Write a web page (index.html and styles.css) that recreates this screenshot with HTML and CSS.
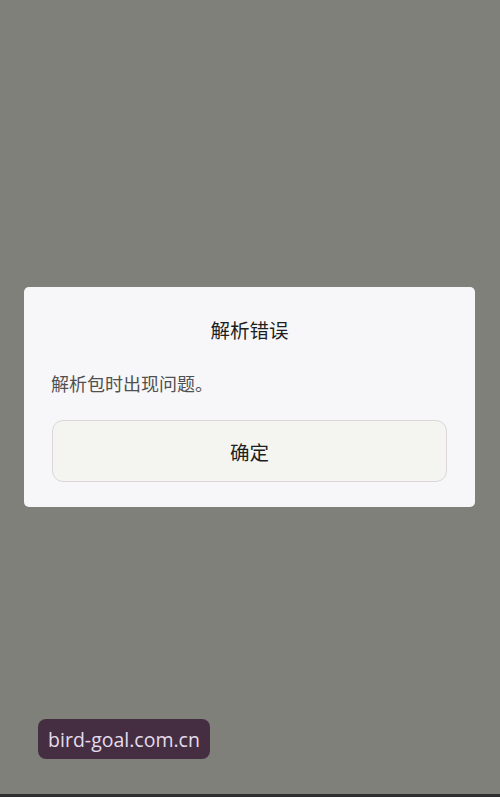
FILE: index.html
```html
<!DOCTYPE html>
<html lang="zh-CN">
<head>
<meta charset="utf-8">
<link rel="stylesheet" href="styles.css">
</head>
<body>
<div class="page">
  <div class="dialog">
    <div class="title">解析错误</div>
    <div class="message">解析包时出现问题。</div>
    <div class="button">确定</div>
  </div>
  <div class="watermark">bird-goal.com.cn</div>
  <div class="bottom-line"></div>
</div>
</body>
</html>
```
FILE: styles.css
```css
html, body {
  margin: 0;
  padding: 0;
}
body {
  background: #80807b;
  font-family: "Noto Sans", "Noto Sans CJK SC", sans-serif;
}
.page {
  height: 797px;
  display: flex;
  flex-direction: column;
  padding-top: 287px;
  box-sizing: border-box;
}
.dialog {
  margin: 0 25px 0 24px;
  background: #f7f7f9;
  border-radius: 5px;
  padding: 29px 28px 25px 28px;
  display: flex;
  flex-direction: column;
}
.title {
  text-align: center;
  font-size: 19.5px;
  line-height: 28px;
  color: #1e1e1e;
  font-family: "Noto Sans CJK SC", sans-serif;
}
.message {
  margin-top: 27px;
  font-size: 18px;
  line-height: 24px;
  color: #505050;
  font-family: "Noto Sans CJK SC", sans-serif;
  margin-left: -1px;
}
.button {
  margin-top: 25px;
  height: 62px;
  box-sizing: border-box;
  border: 1px solid #dcd6da;
  border-radius: 11px;
  background: #f4f4f1;
  display: flex;
  align-items: center;
  justify-content: center;
  font-size: 19.5px;
  color: #1e1e1e;
  font-family: "Noto Sans CJK SC", sans-serif;
}
.watermark {
  margin-top: auto;
  margin-left: 38px;
  margin-bottom: 35px;
  align-self: flex-start;
  width: 172px;
  height: 40px;
  box-sizing: border-box;
  background: #452e42;
  border-radius: 8px;
  color: #e4dcec;
  font-family: "Open Sans", "Noto Sans", sans-serif;
  font-size: 19.5px;
  display: flex;
  align-items: center;
  justify-content: center;
}
.bottom-line {
  height: 3px;
  background: #2e2e2e;
}
```
